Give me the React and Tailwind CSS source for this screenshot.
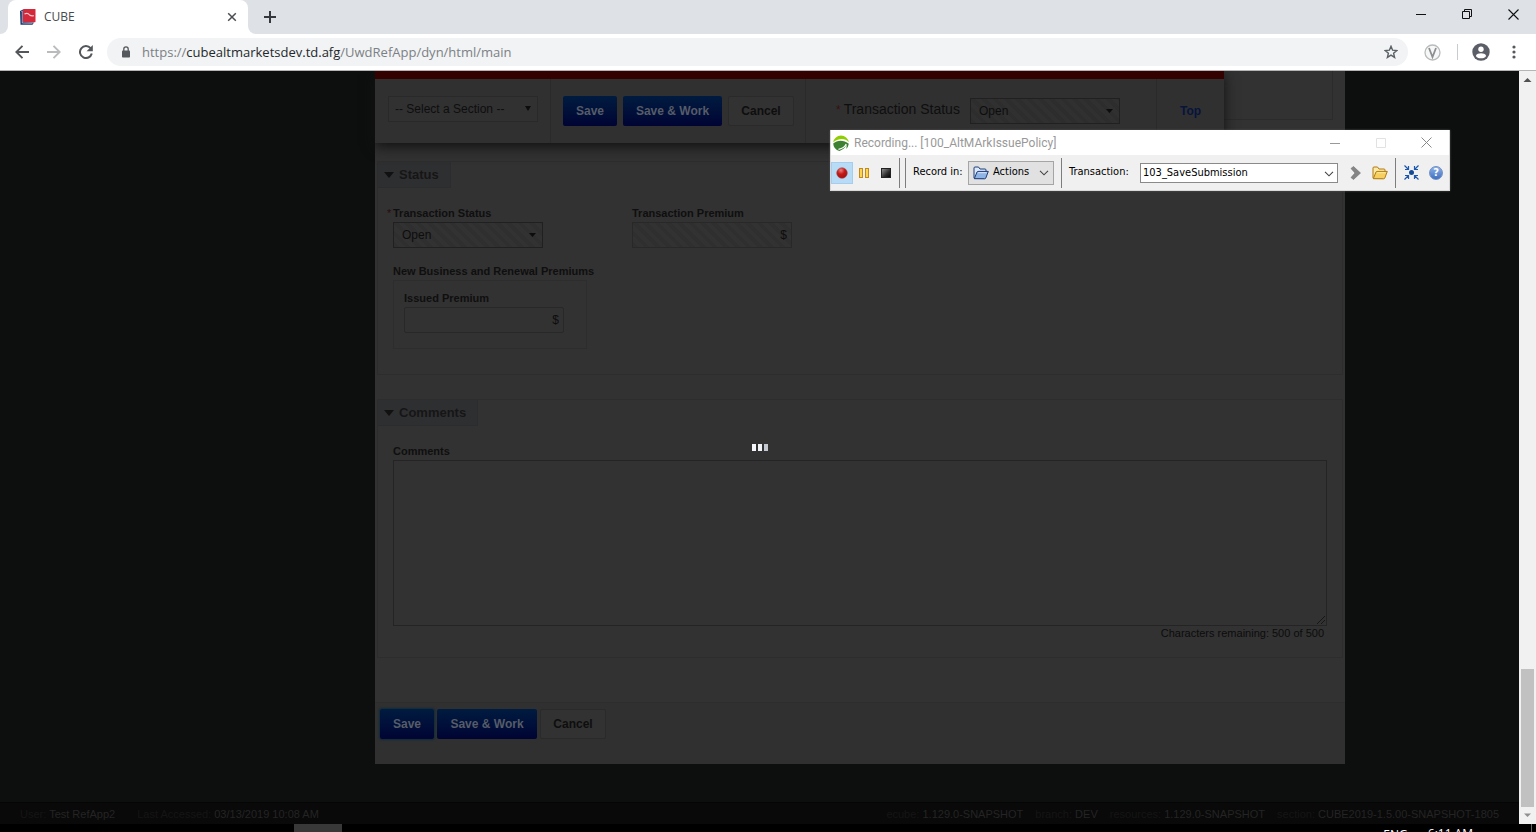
import React from "react";

const chromeFont = "font-['Open_Sans','Noto_Sans',sans-serif]";
const toolFont = "font-['DejaVu_Sans_Condensed','DejaVu_Sans',sans-serif]";
const stripes =
  "bg-[repeating-linear-gradient(45deg,#2f2f2f_0px,#2f2f2f_4px,#323232_4px,#323232_8px)]";
const stripesBack =
  "bg-[repeating-linear-gradient(45deg,#2d2d2d_0px,#2d2d2d_4px,#303030_4px,#303030_8px)]";

function TabStrip() {
  return (
    <div className="flex h-[34px] shrink-0 items-stretch bg-[#dee1e6]">
      <div className="flex w-2 items-end bg-white">
        <div className="h-full w-2 rounded-br-lg bg-[#dee1e6]" />
      </div>
      <div className="flex w-60 items-center rounded-t-lg bg-white pl-3 pr-2">
        <svg width="16" height="16" viewBox="0 0 16 16" aria-hidden="true">
          <path d="M0 2 L3 0.500 L3 13 L14 13.500 L12.500 15.800 L0.500 15.800 Z" fill="#1f3a6e" />
          <path d="M1.300 2.500 L2.300 2 L2.300 14 L12.500 14.300" fill="none" stroke="#dfe5ef" strokeWidth="0.600" />
          <rect x="3" y="0" width="12.500" height="13.200" rx="0.600" fill="#d3293b" />
          <path d="M4.500 5 C7 3.800 8.500 4.500 9.600 6 C10.800 7.200 12.500 7 14 6.800" fill="none" stroke="#f6c9cd" strokeWidth="1.100" />
        </svg>
        <span className="ml-2 flex-1 text-xs text-[#45494d]">CUBE</span>
        <button aria-label="Close tab" className="flex h-4 w-4 items-center justify-center">
          <svg width="10" height="10" viewBox="0 0 10 10">
            <path d="M1.200 1.200 L8.800 8.800 M8.800 1.200 L1.200 8.800" stroke="#4a4d51" strokeWidth="1.500" />
          </svg>
        </button>
      </div>
      <div className="flex w-2 items-end bg-white">
        <div className="h-full w-2 rounded-bl-lg bg-[#dee1e6]" />
      </div>
      <button aria-label="New tab" className="flex w-7 items-center justify-center">
        <svg width="12" height="12" viewBox="0 0 12 12">
          <path d="M6 0 V12 M0 6 H12" stroke="#35383c" strokeWidth="2" />
        </svg>
      </button>
      <div className="flex-1" />
      <button aria-label="Minimize" className="flex h-7 w-[46px] items-center justify-center">
        <svg width="10" height="10" viewBox="0 0 10 10"><path d="M0 5.500 H10" stroke="#111" /></svg>
      </button>
      <button aria-label="Restore" className="flex h-7 w-[46px] items-center justify-center">
        <svg width="10" height="10" viewBox="0 0 10 10">
          <path d="M0.500 2.500 H7.500 V9.500 H0.500 Z M2.500 2.500 V0.500 H9.500 V7.500 H7.500" fill="none" stroke="#111" />
        </svg>
      </button>
      <button aria-label="Close window" className="flex h-7 w-[46px] items-center justify-center">
        <svg width="11" height="11" viewBox="0 0 11 11">
          <path d="M0.500 0.500 L10.500 10.500 M10.500 0.500 L0.500 10.500" stroke="#111" strokeWidth="1.100" />
        </svg>
      </button>
    </div>
  );
}

function AddressBar() {
  return (
    <div className="flex h-[37px] shrink-0 items-center border-b border-[#b6b4b6] bg-white pl-[14px] pr-[14px]">
      <button aria-label="Back" className="flex w-4 justify-center">
        <svg width="14" height="14" viewBox="0 0 14 14">
          <path d="M14 7 H1.500 M7.500 0.800 L1.300 7 L7.500 13.200" fill="none" stroke="#53565a" strokeWidth="1.900" />
        </svg>
      </button>
      <button aria-label="Forward" className="ml-4 flex w-4 justify-center">
        <svg width="14" height="14" viewBox="0 0 14 14">
          <path d="M0 7 H12.500 M6.500 0.800 L12.700 7 L6.500 13.200" fill="none" stroke="#b9bbbd" strokeWidth="1.900" />
        </svg>
      </button>
      <button aria-label="Reload" className="ml-4 flex w-4 justify-center">
        <svg width="14" height="14" viewBox="0 0 14 14">
          <path d="M11.600 3.200 A6 6 0 1 0 12.800 8.600" fill="none" stroke="#53565a" strokeWidth="2" />
          <path d="M13.800 0 V6.200 H7.600 Z" fill="#53565a" />
        </svg>
      </button>
      <div className="ml-[13px] flex h-7 flex-1 items-center rounded-full bg-[#f1f3f4] pl-[15px] pr-[10px]">
        <svg width="8" height="12" viewBox="0 0 8 12" aria-hidden="true">
          <rect x="0" y="4.500" width="8" height="7" rx="0.800" fill="#55585c" />
          <path d="M1.800 5 V3 A2.200 2.200 0 0 1 6.200 3 V5" fill="none" stroke="#55585c" strokeWidth="1.300" />
        </svg>
        <div className="ml-3 flex-1 text-[13px] leading-5 text-[#7c8085]">
          https://<span className="text-[#25282b]">cubealtmarketsdev.td.afg</span>/UwdRefApp/dyn/html/main
        </div>
        <button aria-label="Bookmark this page">
          <svg width="14" height="14" viewBox="0 0 14 14">
            <path d="M7 1.300 L8.600 5.200 L12.800 5.500 L9.600 8.200 L10.600 12.400 L7 10.100 L3.400 12.400 L4.400 8.200 L1.200 5.500 L5.400 5.200 Z" fill="none" stroke="#5c6064" strokeWidth="1.400" />
          </svg>
        </button>
      </div>
      <button aria-label="Extension" className="ml-4">
        <svg width="17" height="17" viewBox="0 0 17 17">
          <circle cx="8.500" cy="8.500" r="7.500" fill="#f7f7f7" stroke="#b9bbbd" strokeWidth="1.300" />
          <path d="M5 4 L8.500 13 L12 4" fill="none" stroke="#8c8f92" strokeWidth="1.800" />
        </svg>
      </button>
      <div className="ml-4 h-4 w-px bg-[#c9cbce]" />
      <button aria-label="Profile" className="ml-[14px]">
        <svg width="18" height="18" viewBox="0 0 18 18">
          <circle cx="9" cy="9" r="8.700" fill="#5b5e66" />
          <circle cx="9" cy="6.200" r="2.700" fill="#fff" />
          <path d="M3.800 12.900 C4.500 10.900 7 10.300 9 10.300 C11 10.300 13.500 10.900 14.200 12.900 C12.600 14.800 11 15.300 9 15.300 C7 15.300 5.400 14.800 3.800 12.900 Z" fill="#fff" />
        </svg>
      </button>
      <button aria-label="Menu" className="ml-4 flex w-4 justify-center">
        <svg width="4" height="14" viewBox="0 0 4 14" fill="#55585c">
          <circle cx="2" cy="2" r="1.600" /><circle cx="2" cy="7" r="1.600" /><circle cx="2" cy="12" r="1.600" />
        </svg>
      </button>
    </div>
  );
}

function BlueButton({ children, focused, className }) {
  return (
    <button
      className={
        "h-[30px] rounded-xs bg-linear-to-b from-[#001b40] to-[#000433] text-xs font-bold text-[#565c68] " +
        (focused ? "shadow-[0_0_2px_1px_#0d2c3d] " : "") +
        className
      }
    >
      {children}
    </button>
  );
}

function CancelButton() {
  return (
    <button className="h-[30px] w-[66px] rounded-xs border border-[#2a2a2a] bg-[#323232] text-xs font-bold text-[#0e0e0e]">
      Cancel
    </button>
  );
}

function StatusSelect({ id, label, bg }) {
  return (
    <div className="relative w-[150px]">
      <select
        id={id}
        aria-label={label}
        disabled
        defaultValue="Open"
        className={"block h-[26px] w-full appearance-none border border-[#202020] pl-2 text-xs text-[#0d0d0d] opacity-100 " + bg}
      >
        <option>Open</option>
      </select>
      <svg className="pointer-events-none absolute right-[7px] top-[11px]" width="7" height="4" viewBox="0 0 7 4" aria-hidden="true">
        <path d="M0 0 H7 L3.500 4 Z" fill="#0c0c0c" />
      </svg>
    </div>
  );
}

function StickyBar() {
  return (
    <div className="flex h-[72px] items-start">
      <div className="relative z-10 h-full w-[849px] border-t-8 border-[#340101] bg-[#303030] shadow-[0_4px_12px_#121212]">
        <div className="flex h-full items-stretch">
          <div className="w-[176px] border-r border-[#2a2a2a] pl-[13px] pt-[17px]">
            <div className="relative w-[150px]">
              <select
                aria-label="Section"
                className="block h-[26px] w-full appearance-none border border-[#292929] bg-[#313131] pl-[6px] text-xs text-[#0e0e0e]"
              >
                <option>-- Select a Section --</option>
              </select>
              <svg className="pointer-events-none absolute right-[7px] top-[10px]" width="6" height="5" viewBox="0 0 6 5" aria-hidden="true">
                <path d="M0 0 H6 L3 5 Z" fill="#0c0c0c" />
              </svg>
            </div>
          </div>
          <div className="flex w-[255px] items-start gap-[6px] border-r border-[#2a2a2a] pl-3 pt-[17px]">
            <BlueButton className="w-[54px]">Save</BlueButton>
            <BlueButton className="w-[99px]">Save &amp; Work</BlueButton>
            <CancelButton />
          </div>
          <div className="flex flex-1 items-start border-r border-[#2a2a2a] pl-[30px] pt-[19px]">
            <label htmlFor="sticky-status" className="w-[134px] text-sm leading-[22px] text-[#0e0e0e]">
              <span className="mr-[3px] text-xs text-[#381010]">*</span>Transaction Status
            </label>
            <StatusSelect id="sticky-status" label="Transaction Status" bg={stripesBack} />
          </div>
          <div className="w-[67px] pt-[19px] text-center">
            <a href="#top" className="text-xs font-bold leading-[22px] text-[#07143c]">Top</a>
          </div>
        </div>
      </div>
      <div className="h-[49px] w-[109px] border-b border-r border-[#2b2b2b]" />
    </div>
  );
}

function Section({ title, className, children }) {
  return (
    <section className={"ml-[2px] mr-[2px] border border-[#2d2d2d] " + className}>
      <h2 className="flex">
        <button className="flex h-[26px] items-center border-b border-r border-[#2b2c2e] bg-[#2e2f31] pl-[6px] pr-[11px] text-[13px] font-bold text-[#161616]">
          <svg className="mr-[5px]" width="10" height="6" viewBox="0 0 10 6" aria-hidden="true">
            <path d="M0 0 H10 L5 6 Z" fill="#111" />
          </svg>
          {title}
        </button>
      </h2>
      {children}
    </section>
  );
}

const labelClass = "block text-[11px] font-bold leading-[14px] text-[#0f0f0f]";

function StatusSection() {
  return (
    <Section title="Status" className="mt-[18px] h-[214px]">
      <div className="pl-[15px] pt-[18px]">
        <div className="flex">
          <div className="w-[239px]">
            <label htmlFor="status" className={labelClass + " relative mb-[2px]"}>
              <span className="absolute -left-[6px] font-normal text-[#2a0c0c]">*</span>Transaction Status
            </label>
            <StatusSelect id="status" label="Transaction Status" bg={stripes} />
          </div>
          <div>
            <label htmlFor="premium" className={labelClass + " mb-[2px]"}>Transaction Premium</label>
            <input
              id="premium"
              disabled
              defaultValue="$"
              className={"block h-[26px] w-40 border border-[#282828] pr-1 text-right text-xs text-[#0d0d0d] " + stripes}
            />
          </div>
        </div>
        <fieldset>
          <legend className={labelClass + " mb-[2px] pt-4"}>New Business and Renewal Premiums</legend>
          <div className="h-[69px] w-[194px] border border-[#2d2d2d] pl-[10px] pt-[10px]">
            <label htmlFor="issued" className={labelClass + " mb-[2px]"}>Issued Premium</label>
            <input
              id="issued"
              defaultValue="$"
              className="block h-[26px] w-40 rounded-xs border border-[#282828] bg-[#323232] pr-1 text-right text-xs text-[#0d0d0d]"
            />
          </div>
        </fieldset>
      </div>
    </Section>
  );
}

function CommentsSection() {
  return (
    <Section title="Comments" className="mt-6 h-[259px]">
      <div className="pl-[15px] pr-[15px] pt-[18px]">
        <label htmlFor="comments" className={labelClass + " mb-[2px]"}>Comments</label>
        <div className="relative">
          <textarea id="comments" className="block h-[166px] w-full resize-none border border-[#242424] bg-[#323232]" />
          <svg className="pointer-events-none absolute bottom-[2px] right-[2px]" width="8" height="8" viewBox="0 0 8 8" aria-hidden="true">
            <path d="M0 8 L8 0 M4 8 L8 4" stroke="#161616" />
          </svg>
        </div>
        <p className="pr-[3px] text-right text-[11px] leading-[14px] text-[#0c0c0c]">Characters remaining: 500 of 500</p>
      </div>
    </Section>
  );
}

function FooterItem({ name, value }) {
  return (
    <span>
      <span className="text-[#151515]">{name}</span> <span className="text-[#242424]">{value}</span>
    </span>
  );
}

function Scrollbar() {
  return (
    <div className="flex w-[17px] shrink-0 flex-col items-center bg-[#f1f1f1]">
      <svg width="17" height="17" viewBox="0 0 17 17" aria-hidden="true">
        <path d="M4.500 11 H12.500 L8.500 7 Z" fill="#505050" />
      </svg>
      <div className="flex-1" />
      <div className="h-[138px] w-[13px] bg-[#c1c1c1]" />
      <svg width="17" height="17" viewBox="0 0 17 17" aria-hidden="true">
        <path d="M5 6.500 H12 L8.500 10 Z" fill="#8f8f8f" />
      </svg>
    </div>
  );
}

function Rule() {
  return <div className="h-[30px] w-px bg-[#7d7d7d]" />;
}

function Folder({ blue }) {
  const stroke = blue ? "#1f3c78" : "#b07a12";
  const back = blue ? "#dce9fa" : "#fbe9a6";
  const front = blue ? "#8fb4e6" : "#f7cf5e";
  return (
    <svg width="16" height="14" viewBox="0 0 16 14" aria-hidden="true">
      <path d="M1 12 V2 Q1 1 2 1 H5.500 L7 3 H12 Q13 3 13 4 V6 L11 12.500 H1.500 Z" fill={back} stroke={stroke} strokeLinejoin="round" />
      <path d="M1.300 12.700 L4 6 Q4.300 5.400 5 5.400 H15.300 L12.800 12 Q12.500 12.800 11.700 12.800 Z" fill={front} stroke={stroke} strokeLinejoin="round" />
      <path d="M5.200 6.700 H13.600" stroke={back} />
    </svg>
  );
}

function Recorder() {
  return (
    <div className="absolute left-[830px] top-[130px] z-30 w-[620px] border border-t-0 border-[#d8d8d8] bg-[#f0f0f0] shadow-[0_0_2px_#555]">
      <div className="flex h-[25px] items-center bg-white pl-[2px] font-['Roboto',sans-serif]">
        <svg width="16" height="16" viewBox="0 0 16 16" aria-hidden="true">
          <path d="M0.200 7.200 A7.900 7.900 0 0 1 15.800 7.200 C12 2.800 6 3 0.200 7.200 Z" fill="#8fce00" />
          <path d="M0.200 8.600 C4 4.800 11 4.600 15.800 8.800 A7.900 7.900 0 0 1 13 14 C13.800 12.500 13.800 11 13.400 9.800 C12.400 12.800 10 14.600 6.500 15.900 A7.900 7.900 0 0 1 0.200 8.600 Z" fill="#3d8032" />
          <path d="M5.500 14.300 C9.500 13.500 12 12 13.200 9" stroke="#fff" strokeWidth="1.200" fill="none" />
        </svg>
        <span className="ml-[5px] flex-1 text-xs text-[#999]">Recording... [100_AltMArkIssuePolicy]</span>
        <button aria-label="Minimize recorder" className="flex w-[46px] justify-center">
          <svg width="10" height="10" viewBox="0 0 10 10"><path d="M0 5.500 H10" stroke="#999" /></svg>
        </button>
        <button aria-label="Maximize recorder" disabled className="flex w-[46px] justify-center">
          <svg width="10" height="10" viewBox="0 0 10 10"><path d="M0.500 0.500 H9.500 V9.500 H0.500 Z" fill="none" stroke="#e2e2e2" /></svg>
        </button>
        <button aria-label="Close recorder" className="flex w-[45px] justify-center">
          <svg width="11" height="11" viewBox="0 0 11 11"><path d="M0.500 0.500 L10.500 10.500 M10.500 0.500 L0.500 10.500" stroke="#888" /></svg>
        </button>
      </div>
      <div className={"flex h-[35px] items-center text-[11px] text-black " + toolFont}>
        <button aria-label="Record" className="flex h-[22px] w-[22px] items-center justify-center border border-[#a4cdf0] bg-[#b9dcf6]">
          <svg width="12" height="12" viewBox="0 0 12 12">
            <defs>
              <radialGradient id="rec" cx="0.400" cy="0.250" r="0.800">
                <stop offset="0" stopColor="#e88080" /><stop offset="0.450" stopColor="#c41a18" /><stop offset="1" stopColor="#a01010" />
              </radialGradient>
            </defs>
            <circle cx="6" cy="6" r="5.300" fill="url(#rec)" stroke="#a64b4b" strokeWidth="0.600" />
          </svg>
        </button>
        <button aria-label="Pause" className="ml-[6px]">
          <svg width="10" height="10" viewBox="0 0 10 10" fill="#fbd54a" stroke="#c4881c">
            <rect x="0.500" y="0.500" width="3" height="9" /><rect x="6.500" y="0.500" width="3" height="9" />
          </svg>
        </button>
        <button aria-label="Stop" className="ml-3">
          <svg width="10" height="10" viewBox="0 0 10 10">
            <defs>
              <linearGradient id="stop" x1="0" y1="0" x2="1" y2="1">
                <stop offset="0" stopColor="#999" /><stop offset="0.600" stopColor="#2a2a2a" /><stop offset="1" stopColor="#000" />
              </linearGradient>
            </defs>
            <rect x="0.500" y="0.500" width="9" height="9" fill="url(#stop)" stroke="#222" />
          </svg>
        </button>
        <div className="ml-2 flex gap-[5px]"><Rule /><Rule /></div>
        <span className="ml-[7px] w-[55px] whitespace-nowrap">Record in:</span>
        <button className="flex h-6 w-[86px] items-center border border-[#a5a5a5] bg-[#e1e1e1] pl-1 pr-1">
          <Folder blue />
          <span className="ml-1 flex-1 text-left">Actions</span>
          <svg width="10" height="6" viewBox="0 0 10 6" aria-hidden="true"><path d="M1 0.800 L5 4.800 L9 0.800" fill="none" stroke="#444" strokeWidth="1.100" /></svg>
        </button>
        <div className="ml-[7px] flex"><Rule /></div>
        <label htmlFor="transaction" className="ml-[7px] w-[71px] whitespace-nowrap">Transaction:</label>
        <div className="relative flex-1">
          <select id="transaction" className="block h-5 w-full appearance-none border border-[#8a8a8a] bg-white pl-[2px] leading-[18px]">
            <option>103_SaveSubmission</option>
          </select>
          <svg className="pointer-events-none absolute right-1 top-2" width="10" height="6" viewBox="0 0 10 6" aria-hidden="true">
            <path d="M1 0.800 L5 4.800 L9 0.800" fill="none" stroke="#444" strokeWidth="1.100" />
          </svg>
        </div>
        <button aria-label="Next" className="ml-3">
          <svg width="11" height="14" viewBox="0 0 11 14"><path d="M1 2.500 L3.500 0.500 L10.500 7 L3.500 13.500 L1 11.500 L5 7 Z" fill="#858585" stroke="#707070" strokeWidth="0.600" /></svg>
        </button>
        <button aria-label="Open folder" className="ml-[11px]"><Folder /></button>
        <div className="ml-[7px] flex"><Rule /></div>
        <button aria-label="Shrink" className="ml-2">
          <svg width="15" height="15" viewBox="0 0 15 15" fill="none" stroke="#1c57b0" strokeWidth="1.200">
            <circle cx="7.500" cy="7.500" r="2.500" fill="#134a96" stroke="none" />
            <path d="M0.500 0.500 L4 4 M4.500 1 V4.500 H1 M14.500 0.500 L11 4 M10.500 1 V4.500 H14 M0.500 14.500 L4 11 M4.500 14 V10.500 H1 M14.500 14.500 L11 11 M10.500 14 V10.500 H14" />
          </svg>
        </button>
        <button aria-label="Help" className="ml-[10px] mr-[6px] flex h-[14px] w-[14px] items-center justify-center rounded-full border border-[#6f8fc4] bg-linear-to-b from-[#8fb2e8] to-[#3f6fc0] text-[11px] font-bold leading-none text-white">
          ?
        </button>
      </div>
    </div>
  );
}

export default function App() {
  return (
    <div className="relative flex h-screen flex-col overflow-hidden bg-black font-['Liberation_Sans',Arial,sans-serif]">
      <header className={chromeFont}>
        <TabStrip />
        <AddressBar />
      </header>

      <div className="flex min-h-0 flex-1">
        <div className="relative flex min-w-0 flex-1 flex-col bg-[#0d0f0e]">
          <main className="flex min-h-0 flex-1 overflow-hidden">
            <div className="grow-[375] basis-0" />
            <div className="w-[970px] shrink-0 self-start bg-[#323232]">
              <StickyBar />
              <StatusSection />
              <CommentsSection />
              <div className="mt-[44px] flex h-[62px] gap-[3px] border-t border-[#2d2d2d] bg-[#303030] pl-[5px] pt-[6px]">
                <BlueButton focused className="w-[54px]">Save</BlueButton>
                <BlueButton className="w-[100px]">Save &amp; Work</BlueButton>
                <CancelButton />
              </div>
            </div>
            <div className="grow-[174] basis-0" />
          </main>
          <footer className="flex h-[22px] shrink-0 items-center justify-between border-t border-[#050505] bg-[#090909] px-5 pt-px text-[11px]">
            <div className="flex gap-[22px]">
              <FooterItem name="User:" value="Test RefApp2" />
              <FooterItem name="Last Accessed:" value="03/13/2019 10:08 AM" />
            </div>
            <div className="flex gap-3">
              <FooterItem name="ecube:" value="1.129.0-SNAPSHOT" />
              <FooterItem name="branch:" value="DEV" />
              <FooterItem name="resources:" value="1.129.0-SNAPSHOT" />
              <FooterItem name="section:" value="CUBE2019-1.5.00-SNAPSHOT-1805" />
            </div>
          </footer>
          <div role="status" aria-label="Loading" className="pointer-events-none absolute inset-0 z-20 flex items-center justify-center gap-[2px]">
            <div className="h-[7px] w-1 bg-[#f4f6fa]" />
            <div className="h-[7px] w-1 bg-[#eef1f6]" />
            <div className="h-[7px] w-1 bg-[#c3c7cf]" />
          </div>
        </div>
        <Scrollbar />
      </div>

      <div className={"flex h-2 shrink-0 overflow-hidden bg-black text-xs leading-4 text-white " + chromeFont}>
        <div className="ml-[294px] h-2 w-12 bg-[#383838]" />
        <div className="flex-1" />
        <span className="pt-[3px]">ENG</span>
        <span className="ml-5 mr-[58px] pt-[2px]">6:11 AM</span>
        <div className="mr-1 h-2 w-px bg-[#666]" />
      </div>

      <Recorder />
    </div>
  );
}
